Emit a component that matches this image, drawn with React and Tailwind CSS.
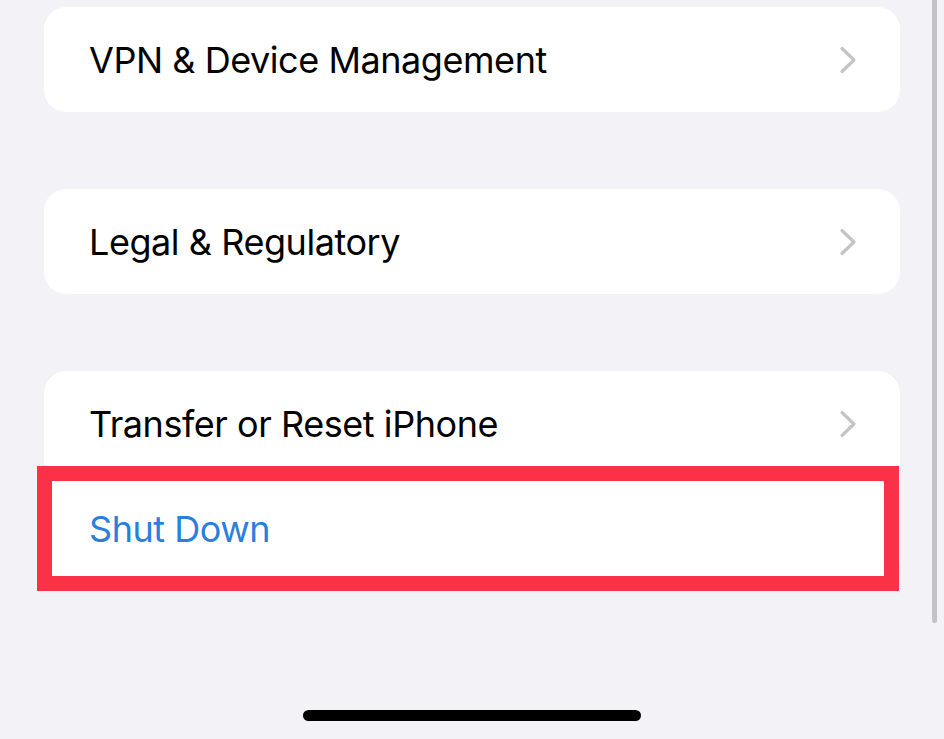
import { useState } from 'react';

const FONT = { fontFamily: 'Inter, "Noto Sans", "Liberation Sans", sans-serif' };

function Chevron() {
  return (
    <svg width="18" height="28" viewBox="0 0 18 28" fill="none" className="shrink-0">
      <polyline
        points="3,2.5 15,14 3,25.5"
        stroke="#c4c4c7"
        strokeWidth="3.2"
        strokeLinecap="round"
        strokeLinejoin="round"
      />
    </svg>
  );
}

function Row({ label, chevron = true, blue = false }) {
  return (
    <div className="flex h-[105px] items-center justify-between pl-[45px] pr-[43px]">
      <span
        className={`text-[36px] tracking-[-0.45px] ${blue ? 'text-[#2a7fdc]' : 'text-black'}`}
      >
        {label}
      </span>
      {chevron && <Chevron />}
    </div>
  );
}

export default function App() {
  const [items] = useState([
    [{ label: 'VPN & Device Management' }],
    [{ label: 'Legal & Regulatory' }],
    [{ label: 'Transfer or Reset iPhone' }, { label: 'Shut Down', chevron: false, blue: true }],
  ]);

  return (
    <div className="relative h-[739px] w-[944px] overflow-hidden bg-[#f2f2f7]" style={FONT}>
      <div className="flex flex-col gap-[77px] pl-[44px] pr-[44px] pt-[7px]">
        {items.map((group, i) => (
          <div key={i} className="overflow-hidden rounded-[22px] bg-white">
            {group.map((row) => (
              <Row key={row.label} {...row} />
            ))}
          </div>
        ))}
      </div>

      {/* highlight around Shut Down */}
      <div className="absolute left-[37px] top-[466px] h-[125px] w-[862px] border-[15px] border-[#fb3148]" />

      {/* scroll indicator */}
      <div className="absolute right-[7px] top-0 h-[623px] w-[5px] rounded-b-full bg-[#c3c3c7]" />

      {/* home indicator */}
      <div className="absolute bottom-[18px] left-[303px] h-[11px] w-[338px] rounded-full bg-black" />
    </div>
  );
}
